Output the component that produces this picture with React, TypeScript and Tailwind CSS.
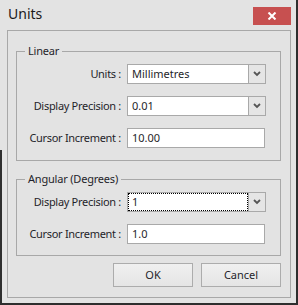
import React from "react";

const font = { fontFamily: '"Noto Sans", "Open Sans", sans-serif' };

const Chevron = () => (
  <svg width="8" height="6" viewBox="0 0 8 6">
    <path d="M1 1 L4 4 L7 1" fill="none" stroke="#555" strokeWidth="1.8" />
  </svg>
);

const Label = ({ text }: { text: string }) => (
  <div className="w-[104px] shrink-0 whitespace-nowrap text-right text-[11px] leading-[20px] tracking-[-0.3px] text-[#1f1f2a]">
    {text}
  </div>
);

const SelectBox = ({ value, focused }: { value: string; focused?: boolean }) => (
  <div className="ml-[6px] flex h-[20px] w-[139px]">
    <div className="flex-1 border border-[#a9a9a9] bg-white">
      <div
        className={`h-full pl-[3px] text-[11px] leading-[16px] text-[#1f1f2a] ${
          focused ? "border border-dotted border-black" : "border border-transparent"
        }`}
      >
        {value}
      </div>
    </div>
    <div className="-ml-px flex w-[18px] items-center justify-center border border-[#a9a9a9] bg-[#e5e5e5]">
      <Chevron />
    </div>
  </div>
);

const TextBox = ({ value }: { value: string }) => (
  <div className="ml-[6px] h-[20px] w-[138px] border border-[#a9a9a9] bg-white pl-[4px] text-[11px] leading-[18px] text-[#1f1f2a]">
    {value}
  </div>
);

const Row = ({ children }: { children: React.ReactNode }) => (
  <div className="flex items-center">{children}</div>
);

const Group = ({ title, className, children }: { title: string; className: string; children: React.ReactNode }) => (
  <div className={`relative shrink-0 border border-[#a8a8a8] pt-[12px] ${className}`}>
    <span className="absolute left-[8px] top-[-10px] whitespace-nowrap bg-[#e3e3e3] px-[3px] text-[11px] leading-[18px] tracking-[-0.2px] text-[#1f1f2a]">
      {title}
    </span>
    <div className="flex flex-col gap-[12px]">{children}</div>
  </div>
);

const Button = ({ text }: { text: string }) => (
  <div className="flex h-[24px] w-[80px] items-center justify-center border border-[#acacac] bg-gradient-to-b from-[#f0f0f0] to-[#e5e5e5] text-[11px] text-[#1f1f2a]">
    {text}
  </div>
);

export default function App() {
  return (
    <div className="relative h-[305px] w-[298px] overflow-hidden bg-[#e3e3e3]" style={font}>
      {/* window edges */}
      <div className="absolute bottom-0 right-0 top-0 w-[2px] bg-[#2e2e2e]" />
      <div className="absolute bottom-0 left-0 right-0 h-[2px] bg-[#2e2e2e]" />
      <div className="absolute bottom-0 left-0 top-[150px] w-[2px] bg-[#2e2e2e]" />

      {/* title bar */}
      <div className="flex h-[30px] items-start pl-[8px] pr-[7px]">
        <div className="mt-[4px] text-[14px] leading-[20px] text-[#1a1a1a]">Units</div>
        <div className="ml-auto mt-[7px] flex h-[18px] w-[38px] items-center justify-center bg-[#c75050]">
          <svg width="10" height="8" viewBox="0 0 10 8">
            <path d="M1.5 0.5 L8.5 7.5 M8.5 0.5 L1.5 7.5" stroke="#fff" strokeWidth="2" />
          </svg>
        </div>
      </div>

      {/* client frame */}
      <div className="mx-[7px] flex h-[268px] flex-col border border-[#a8a8a8] pl-[8px] pr-[9px]">
        <Group title="Linear" className="mt-[20px] h-[110px]">
          <Row>
            <Label text="Units :" />
            <SelectBox value="Millimetres" />
          </Row>
          <Row>
            <Label text="Display Precision :" />
            <SelectBox value="0.01" />
          </Row>
          <Row>
            <Label text="Cursor Increment :" />
            <TextBox value="10.00" />
          </Row>
        </Group>

        <Group title="Angular (Degrees)" className="mt-[18px] h-[77px]">
          <Row>
            <Label text="Display Precision :" />
            <SelectBox value="1" focused />
          </Row>
          <Row>
            <Label text="Cursor Increment :" />
            <TextBox value="1.0" />
          </Row>
        </Group>

        <div className="mt-[7px] flex justify-end gap-[8px]">
          <Button text="OK" />
          <Button text="Cancel" />
        </div>
      </div>
    </div>
  );
}
